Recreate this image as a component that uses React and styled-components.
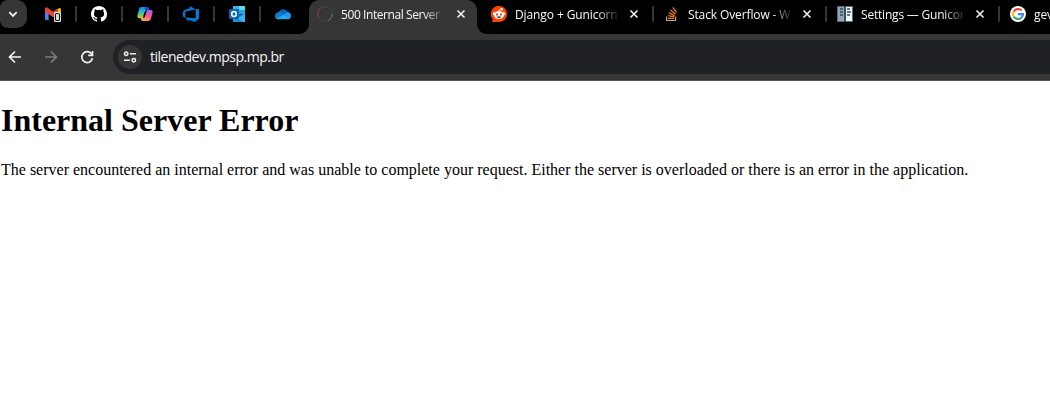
import React from "react";
import styled, { createGlobalStyle } from "styled-components";

const GlobalStyle = createGlobalStyle`
  html, body { margin: 0; padding: 0; background: #fff; }
  body { overflow: hidden; }
`;

const uiFont = `"Open Sans", "Noto Sans", sans-serif`;

const Browser = styled.div`
  width: 1050px;
  height: 407px;
  overflow: hidden;
  background: #fff;
`;

const TabStrip = styled.div`
  display: flex;
  height: 34px;
  background: #000;
  overflow: hidden;
`;

const TabSearch = styled.button`
  flex: none;
  width: 27px;
  height: 28px;
  margin: 0 4px 0 0;
  padding: 0 0 0 6px;
  border: 0;
  border-radius: 8px 10px 10px 8px;
  background: #363636;
  display: flex;
  align-items: center;
`;

const Separator = styled.span`
  flex: none;
  width: 2px;
  height: 16px;
  border-radius: 1px;
  background: #363636;
  margin-left: auto;
`;

const PinnedTab = styled.div`
  flex: none;
  box-sizing: border-box;
  width: 46px;
  height: 28px;
  padding-left: 14px;
  display: flex;
  align-items: center;
`;

const Tab = styled.div`
  flex: none;
  box-sizing: border-box;
  width: 173px;
  height: 28px;
  padding-left: 10px;
  display: flex;
  align-items: center;
`;

const ActiveTab = styled(Tab)`
  position: relative;
  width: 168px;
  height: 34px;
  margin: 0 4px 0 2px;
  padding: 0 0 6px 8px;
  border-radius: 10px 10px 0 0;
  background: #363636;

  &::before,
  &::after {
    content: "";
    position: absolute;
    bottom: 0;
    width: 10px;
    height: 10px;
  }
  &::before {
    left: -10px;
    background: radial-gradient(circle at 0 0, transparent 9.5px, #363636 10.5px);
  }
  &::after {
    right: -10px;
    background: radial-gradient(circle at 100% 0, transparent 9.5px, #363636 10.5px);
  }
`;

const TabTitle = styled.span`
  flex: none;
  width: 102px;
  margin-left: 8px;
  padding-top: 2px;
  overflow: hidden;
  white-space: nowrap;
  color: #f8f8f8;
  font: 12px/20px ${uiFont};
  letter-spacing: ${(p) => p.$spacing};
  mask-image: linear-gradient(to right, #000 82px, transparent 106px);
`;

const CloseButton = styled.button`
  flex: none;
  width: 10px;
  height: 10px;
  margin: 0 0 0 ${(p) => (p.$active ? "13px" : "12px")};
  padding: 0;
  border: 0;
  background: none;
  display: flex;
`;

const Toolbar = styled.div`
  box-sizing: border-box;
  height: 47px;
  padding: 6px 0 6px 7px;
  border-bottom: 1px solid #565251;
  background: #363636;
  display: flex;
  align-items: center;
`;

const NavButton = styled.button`
  flex: none;
  width: 16px;
  height: 16px;
  margin: 0 20px 0 0;
  padding: 0;
  border: 0;
  background: none;
  display: flex;
  color: ${(p) => (p.$dim ? "#7c7c7c" : "#f2f2f2")};
`;

const AddressBar = styled.div`
  flex: 1;
  height: 34px;
  margin-left: -2px;
  padding-left: 5px;
  border-radius: 17px 0 0 17px;
  background: #202125;
  display: flex;
  align-items: center;
`;

const SiteInfo = styled.span`
  flex: none;
  width: 24px;
  height: 24px;
  border-radius: 50%;
  background: #363636;
  display: flex;
  align-items: center;
  justify-content: center;
`;

const Url = styled.span`
  margin-left: 8px;
  color: #f8f8f8;
  font: 14px/20px ${uiFont};
  letter-spacing: -0.48px;
`;

const Page = styled.main`
  padding: 23px 1px 0;
  color: #000;
  font-family: "Liberation Serif", "Times New Roman", serif;
`;

const Heading = styled.h1`
  margin: 0;
  font-size: 32px;
  line-height: 32px;
  font-weight: 700;
`;

const Message = styled.p`
  margin: 25px 0 0;
  font-size: 16px;
  line-height: 18px;
  white-space: nowrap;
`;

const Svg = styled.svg`
  flex: none;
  display: block;
`;

const Icon = ({ size = 16, children }) => (
  <Svg width={size} height={size} viewBox="0 0 16 16" fill="none">
    {children}
  </Svg>
);

const Gmail = () => (
  <Icon>
    <path d="M0 4.5 3.6 7v7H1.2Q0 14 0 12.8Z" fill="#4285f4" />
    <path d="M16 4.5 12.4 7v7h2.4q1.2 0 1.2-1.2Z" fill="#34a853" />
    <path d="M12.4 3.3 14 2.2q2-.6 2 1.6v1.8l-3.6 2.7Z" fill="#fbbc04" />
    <path d="M0 5.6V3.3Q0 .9 2.200 1.400L8 5.8l4.400-3.300v5.500L8 11.2 3.600 8Z" fill="#ea4335" />
    <rect x="9" y="6" width="7" height="10" rx="1.5" fill="#e8eee8" />
    <rect x="10.500" y="7.500" width="4" height="7" rx="1.300" fill="#e8eee8" stroke="#111" strokeWidth="1.200" />
  </Icon>
);

const GitHub = () => (
  <Icon>
    <path
      fill="#fff"
      d="M8 0C3.58 0 0 3.58 0 8c0 3.54 2.29 6.53 5.47 7.59.4.07.55-.17.55-.38 0-.19-.01-.82-.01-1.49-2.01.37-2.53-.49-2.69-.94-.09-.23-.48-.94-.82-1.13-.28-.15-.68-.52-.01-.53.63-.01 1.08.58 1.23.82.72 1.21 1.87.87 2.33.66.07-.52.28-.87.51-1.07-1.78-.2-3.64-.89-3.64-3.95 0-.87.31-1.59.82-2.15-.08-.2-.36-1.02.08-2.12 0 0 .67-.21 2.2.82a7.6 7.6 0 0 1 4 0c1.53-1.04 2.2-.82 2.2-.82.44 1.1.16 1.92.08 2.12.51.56.82 1.27.82 2.15 0 3.07-1.87 3.75-3.65 3.95.29.25.54.73.54 1.48 0 1.07-.01 1.93-.01 2.2 0 .21.15.46.55.38A8.01 8.01 0 0 0 16 8c0-4.42-3.58-8-8-8Z"
    />
  </Icon>
);

const Copilot = () => (
  <Icon>
    <defs>
      <linearGradient id="cpLeft" x1="5" y1="1" x2="4" y2="13" gradientUnits="userSpaceOnUse">
        <stop stopColor="#168bea" />
        <stop offset=".4" stopColor="#28b5c4" />
        <stop offset=".7" stopColor="#7ccb57" />
        <stop offset="1" stopColor="#ffc400" />
      </linearGradient>
      <linearGradient id="cpRight" x1="13" y1="4" x2="9" y2="15" gradientUnits="userSpaceOnUse">
        <stop stopColor="#a660f5" />
        <stop offset=".5" stopColor="#f25a94" />
        <stop offset="1" stopColor="#ff9b55" />
      </linearGradient>
    </defs>
    <path d="M4.8 1h5.4q1.2 0 1.6 1.2l.6 2H9.6q-1 0-1.3 1L6.4 11q-.4 1.2-1.6 1.2H2.3Q.1 12.2.4 9.5L2.2 3Q2.8 1 4.8 1Z" fill="url(#cpLeft)" />
    <path d="M9 1h1.2q1.2 0 1.6 1.2l.6 2H9.6Q9 4.2 8.6 4.6L7.7 2.3Q7.5 1 9 1Z" fill="#1748c9" />
    <path d="M11.2 15H5.8q-1.2 0-1.6-1.2l-.6-1.8h2.8q1 0 1.3-1L9.6 5.2Q10 4 11.2 4h2.5q2.2 0 1.9 2.7L13.8 13q-.6 2-2.6 2Z" fill="url(#cpRight)" />
    <path d="m7.5 6.3 1.4-.2-1.5 4.2-1.2.2Z" fill="#080808" />
  </Icon>
);

const AzureDevOps = () => (
  <Icon>
    <path
      fill="#0078d7"
      d="M16 3v9.5l-4 3.500-6.200-2.300V16l-3.500-4.600 10.300.8V3.300Zm-3.400.4L6.900 0v2.300L1.600 3.900 0 6v4.700l2.300 1V5.500Z"
    />
  </Icon>
);

const Outlook = () => (
  <Icon>
    <path d="M4 0h11q1 0 1 1v9H4Z" fill="#1685d9" />
    <path d="M4 0h6v4H4Z" fill="#38b4ed" />
    <path d="M10 0h5q1 0 1 1v3h-6Z" fill="#5bdcfb" />
    <path d="M10 4h6v4h-6Z" fill="#2ba3e6" />
    <path d="M4 8h12v8H5q-1 0-1-1Z" fill="#0f65b5" />
    <path d="m16 7.500-8.500 5L14 16h2Z" fill="#38b4ef" />
    <path d="m4 12 9 4H5q-1 0-1-1Z" fill="#1d93df" />
    <rect y="3" width="10" height="10" rx="1" fill="#0767b9" />
    <ellipse cx="5" cy="8" rx="2.300" ry="2.500" stroke="#fff" strokeWidth="1.500" />
  </Icon>
);

const OneDrive = () => (
  <Icon>
    <path d="M3.700 6.500A4.900 4.900 0 0 1 12.800 6l-3 5L3 8Z" fill="#0864b8" />
    <path d="M0 10a3.800 3.800 0 0 1 5.600-3.400L10.500 9l-8.900 4A3.500 3.500 0 0 1 0 10Z" fill="#117bd0" />
    <path d="M9 8.500 12 6q4 .2 4 3.800 0 1.500-.8 2.400Z" fill="#179be5" />
    <path d="m1.500 12.400 8-3.900 5.900 3.500q-.8 1.300-2.700 1.300h-9q-1.400 0-2.200-.9Z" fill="#29a9ec" />
  </Icon>
);

const Spinner = () => (
  <Icon>
    <circle cx="8" cy="8" r="7.300" stroke="#494545" strokeWidth=".8" />
    <path d="M2 12A7.300 7.300 0 0 1 5.500 1.100" stroke="#803b3b" strokeWidth="1" />
    <path d="M5.500 1.100A7.300 7.300 0 0 1 11 1.300" stroke="#5b3939" strokeWidth="1" />
    <path d="M15.300 8a7.300 7.300 0 0 1-4 6.500" stroke="#797575" strokeWidth="1" />
  </Icon>
);

const Reddit = () => (
  <Icon>
    <path d="M8 0a8 8 0 1 1 0 16H1.200q-.7 0-.2-.6l1.300-1.700A8 8 0 0 1 8 0Z" fill="#ff4500" />
    <circle cx="3.300" cy="7.800" r="1.500" fill="#fff" />
    <circle cx="12.700" cy="7.800" r="1.500" fill="#fff" />
    <ellipse cx="8" cy="9" rx="4.900" ry="4" fill="#fff" />
    <circle cx="10.700" cy="3.300" r="1.200" fill="#fff" />
    <path d="M8 5q0-1.600 2.200-1.700" stroke="#fff" strokeWidth=".8" />
    <ellipse cx="6" cy="8.500" rx="1" ry="1.200" fill="#f53b12" />
    <ellipse cx="10" cy="8.500" rx="1" ry="1.200" fill="#f53b12" />
    <path d="M5.700 10.500h4.600Q9.700 12.100 8 12.100t-2.300-1.600Z" fill="#273941" />
  </Icon>
);

const StackOverflow = () => (
  <Icon>
    <path d="M2.600 10.500v4h9v-4" stroke="#a4a6a9" strokeWidth="1.200" />
    <g stroke="#f27417" strokeWidth="1.300">
      <path d="M4 12.300h6.200" />
      <path d="m4.100 9.700 6.300 1.200" />
      <path d="m4.800 6.900 5.900 2.700" />
      <path d="m6.400 4.100 5 4.100" />
      <path d="m8.800 1.300 3.800 5.400" />
    </g>
  </Icon>
);

const Docs = () => (
  <Icon>
    <path d="M0 0h16v16H0Z" fill="#586c78" />
    <path d="M1 1h6v14H1Z" fill="#93a7b3" />
    <path d="M9 1h6v14H9Z" fill="#f1f4f5" />
    <path d="M7 0h2v16H7Z" fill="#344e5b" />
    <path d="M3 3h3M3 6h3M3 9h3M10 3h3M10 6h4M10 9h3" stroke="#344e5b" strokeWidth="1.400" />
  </Icon>
);

const Google = () => (
  <Icon>
    <circle cx="8" cy="8" r="8" fill="#fff" />
    <g strokeWidth="2.200">
      <path d="M3.700 5.500A5 5 0 0 1 11.600 4.500" stroke="#ea4335" />
      <path d="M3.700 10.500a5 5 0 0 1 0-5" stroke="#fbbc05" />
      <path d="M11.300 11.800a5 5 0 0 1-7.600-1.300" stroke="#34a853" />
      <path d="M8 8.100h5a5 5 0 0 1-1.700 3.700" stroke="#4285f4" />
    </g>
  </Icon>
);

const Close = ({ active }) => (
  <CloseButton $active={active} aria-label="Close tab">
    <Svg width="10" height="10" viewBox="0 0 10 10">
      <path d="m1.500 1.500 7 7m0-7-7 7" stroke="#f2f2f2" strokeWidth="1.600" />
    </Svg>
  </CloseButton>
);

const pinned = [Gmail, GitHub, Copilot, AzureDevOps, Outlook, OneDrive];

const tabs = [
  { icon: Reddit, title: "Django + Gunicorn", spacing: "-0.1px" },
  { icon: StackOverflow, title: "Stack Overflow - Where", spacing: "-0.12px" },
  { icon: Docs, title: "Settings — Gunicorn", spacing: "-0.2px" },
  { icon: Google, title: "gevent", spacing: "-0.1px" },
];

export default function App() {
  return (
    <Browser>
      <GlobalStyle />
      <TabStrip>
        <TabSearch aria-label="Search tabs">
          <Svg width="14" height="14" viewBox="0 0 14 14" fill="none">
            <path d="m3.300 5.200 3.700 3.700 3.700-3.700" stroke="#f4f4f4" strokeWidth="1.800" />
          </Svg>
        </TabSearch>
        {pinned.map((Glyph, i) => (
          <PinnedTab key={i}>
            <Glyph />
            {i < pinned.length - 1 && <Separator />}
          </PinnedTab>
        ))}
        <ActiveTab>
          <Spinner />
          <TabTitle $spacing="-0.42px">500 Internal Server Error</TabTitle>
          <Close active />
        </ActiveTab>
        {tabs.map(({ icon: Glyph, title, spacing }) => (
          <Tab key={title}>
            <Glyph />
            <TabTitle $spacing={spacing}>{title}</TabTitle>
            <Close />
            <Separator />
          </Tab>
        ))}
      </TabStrip>
      <Toolbar>
        <NavButton aria-label="Back">
          <Icon>
            <path d="M14 8H3M8 2.500 2.500 8 8 13.500" stroke="currentColor" strokeWidth="1.700" />
          </Icon>
        </NavButton>
        <NavButton aria-label="Forward" $dim>
          <Icon>
            <path d="M2 8h11M8 2.500 13.500 8 8 13.500" stroke="currentColor" strokeWidth="1.700" />
          </Icon>
        </NavButton>
        <NavButton aria-label="Reload">
          <Icon>
            <path d="M13.500 9.200A5.400 5.400 0 1 1 12.400 4.700L13.500 6" stroke="currentColor" strokeWidth="1.700" />
            <path d="M13.500 2v4.300H9.200" stroke="currentColor" strokeWidth="1.700" />
          </Icon>
        </NavButton>
        <AddressBar>
          <SiteInfo>
            <Svg width="14" height="14" viewBox="0 0 14 14" fill="none" stroke="#f2f2f2" strokeWidth="1.500">
              <circle cx="3.200" cy="3.700" r="1.700" />
              <path d="M7 3.700h6M1 10.300h6" />
              <circle cx="10.800" cy="10.300" r="1.700" />
            </Svg>
          </SiteInfo>
          <Url>tilenedev.mpsp.mp.br</Url>
        </AddressBar>
      </Toolbar>
      <Page>
        <Heading>Internal Server Error</Heading>
        <Message>
          The server encountered an internal error and was unable to complete your request. Either the server is
          overloaded or there is an error in the application.
        </Message>
      </Page>
    </Browser>
  );
}
